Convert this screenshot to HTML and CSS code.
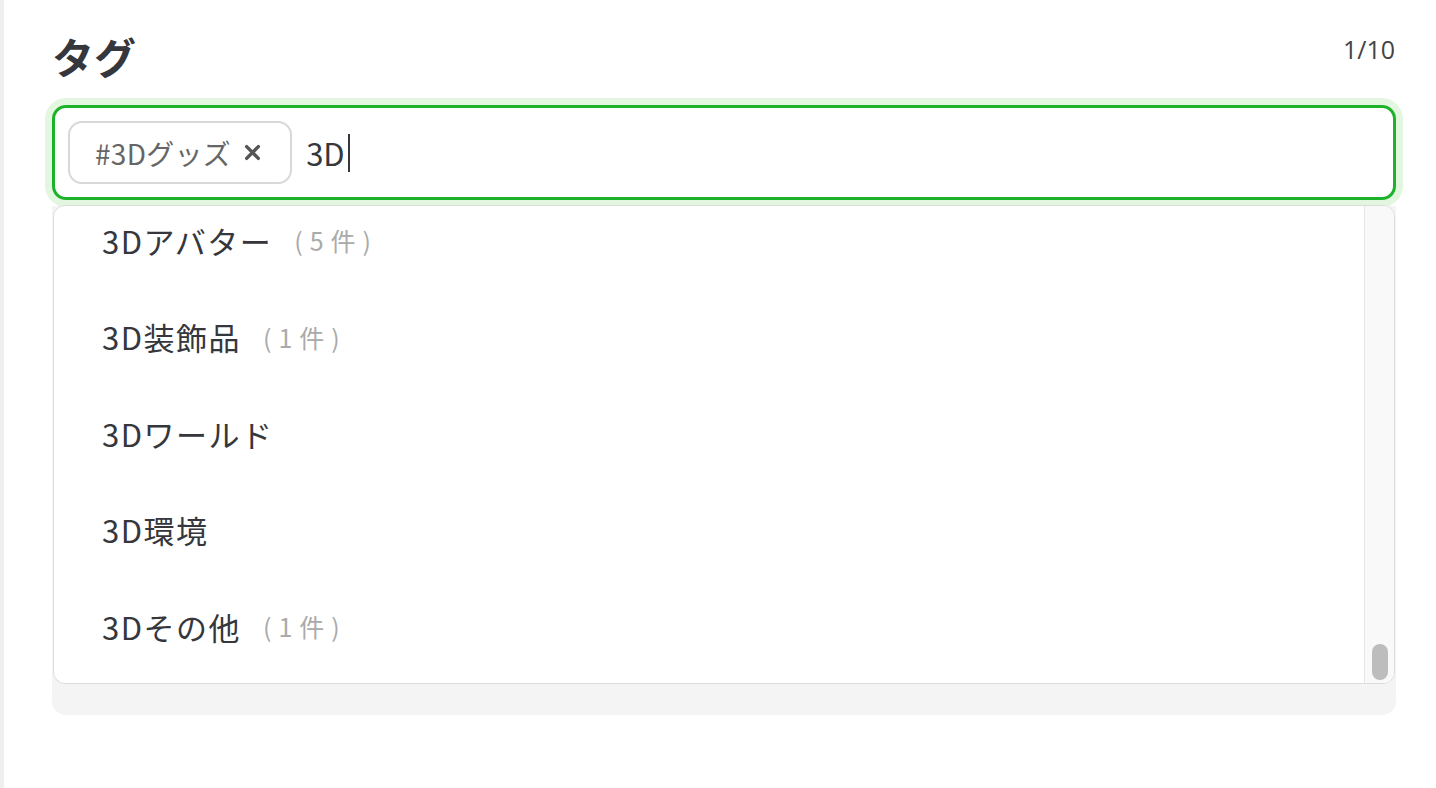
FILE: index.html
```html
<!DOCTYPE html>
<html lang="ja">
<head>
<meta charset="utf-8">
<title>タグ</title>
<link rel="stylesheet" href="styles.css">
</head>
<body>
<div class="page">
  <div class="field">
    <div class="field-head">
      <h2 class="field-title">タグ</h2>
      <span class="field-count">1/10</span>
    </div>
    <div class="tag-input-wrap">
      <div class="tag-input">
        <span class="chip">#3Dグッズ<svg class="chip-x" viewBox="0 0 16 16" width="17" height="17" aria-hidden="true"><path d="M2.5 2.5 L13.5 13.5 M13.5 2.5 L2.5 13.5" stroke="#555" stroke-width="3.2" stroke-linecap="round"/></svg></span>
        <span class="typed">3D<span class="caret"></span></span>
      </div>
      <div class="dropdown">
        <ul class="options">
          <li class="option">3Dアバター<span class="cnt">(5件)</span></li>
          <li class="option">3D装飾品<span class="cnt">(1件)</span></li>
          <li class="option">3Dワールド</li>
          <li class="option">3D環境</li>
          <li class="option">3Dその他<span class="cnt">(1件)</span></li>
        </ul>
        <div class="scroll-track"><div class="scroll-thumb"></div></div>
      </div>
    </div>
    <div class="under-panel"></div>
  </div>
</div>
</body>
</html>
```
FILE: styles.css
```css
* { box-sizing: border-box; }
html, body { margin: 0; padding: 0; background: #fff; }
body {
  font-family: "Noto Sans CJK JP", "Noto Sans", sans-serif;
  color: #35373c;
}
.page {
  min-height: 788px;
  border-left: 4px solid #efefef;
  padding: 26px 40px 0 48px;
}
.field { width: 1344px; }
.field-head {
  display: flex;
  justify-content: space-between;
  align-items: flex-start;
  height: 79px;
}
.field-title {
  margin: 0;
  font-size: 42px;
  font-weight: 700;
  line-height: 60px;
  color: #35373c;
}
.field-count {
  font-family: "Open Sans", "Noto Sans", sans-serif;
  font-size: 25px;
  line-height: 46px;
  color: #444;
  padding-right: 1px;
}
.tag-input-wrap { position: relative; }
.tag-input {
  height: 95px;
  border: 3px solid #1cb32a;
  border-radius: 14px;
  box-shadow: 0 0 0 7px #e3f6df;
  padding: 0 13px;
  display: flex;
  align-items: center;
  gap: 14px;
  background: #fff;
}
.chip {
  height: 63px;
  border: 2px solid #d8d8d8;
  border-radius: 14px;
  padding: 0 29px 0 25px;
  display: flex;
  align-items: center;
  font-size: 28px;
  color: #666;
  letter-spacing: 0.3px;
}
.chip-x {
  margin-left: 13px;
  flex: none;
}
.typed {
  display: flex;
  align-items: center;
  font-size: 31px;
  color: #35373c;
}
.caret {
  display: inline-block;
  width: 2px;
  height: 38px;
  background: #35373c;
  margin-left: 3px;
}
.dropdown {
  position: absolute;
  top: 100px;
  left: 1px;
  right: 1px;
  height: 479px;
  background: #fff;
  border: 1px solid #dcdcdc;
  border-radius: 12px;
  display: flex;
  overflow: hidden;
  z-index: 2;
}
.options {
  list-style: none;
  margin: -14px 0 0 0;
  padding: 0 0 0 48px;
  flex: 1;
}
.option {
  height: 96.5px;
  display: flex;
  align-items: center;
  font-size: 31px;
  letter-spacing: 1.5px;
  color: #35373c;
}
.cnt {
  margin-left: 22px;
  font-size: 25px;
  letter-spacing: 7px;
  color: #aaa;
}
.scroll-track {
  width: 30px;
  border-left: 1px solid #e6e6e6;
  background: #f9f9f9;
  display: flex;
  flex-direction: column;
  justify-content: flex-end;
  padding: 0 0 3px 7px;
}
.scroll-thumb {
  width: 16px;
  height: 36px;
  border-radius: 8px;
  background: #bdbdbd;
}
.under-panel {
  margin-top: 6px;
  height: 509px;
  background: #f4f4f4;
  border-radius: 0 0 14px 14px;
}
```
